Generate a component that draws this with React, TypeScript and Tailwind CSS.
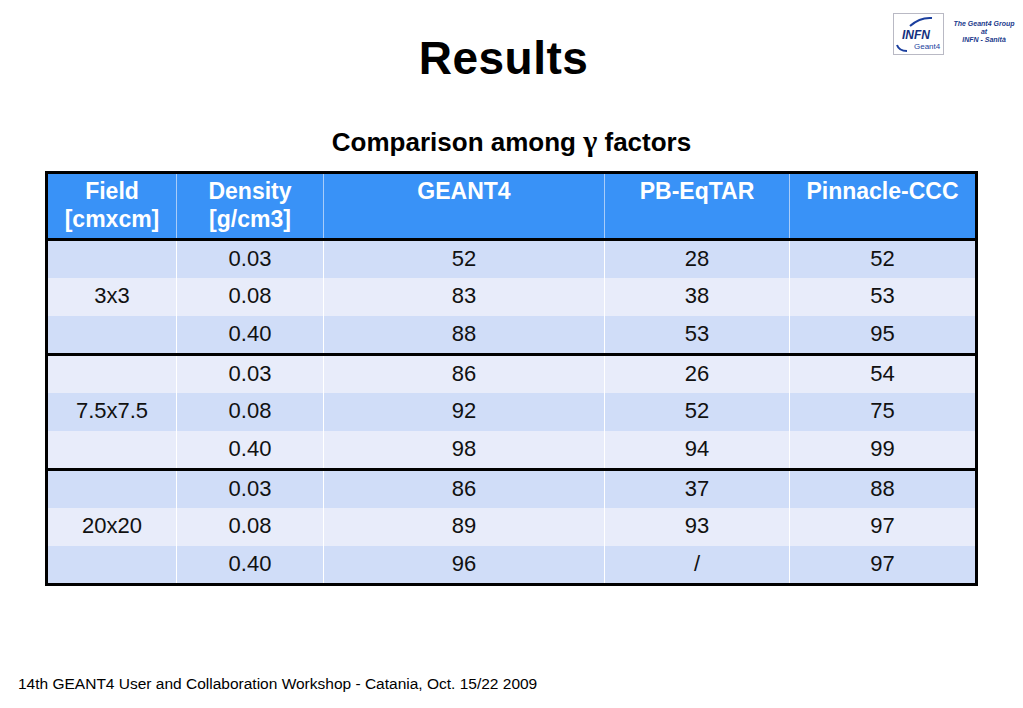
import React from 'react'

const groups = [
  {
    field: '3x3',
    rows: [
      ['0.03', '52', '28', '52'],
      ['0.08', '83', '38', '53'],
      ['0.40', '88', '53', '95'],
    ],
  },
  {
    field: '7.5x7.5',
    rows: [
      ['0.03', '86', '26', '54'],
      ['0.08', '92', '52', '75'],
      ['0.40', '98', '94', '99'],
    ],
  },
  {
    field: '20x20',
    rows: [
      ['0.03', '86', '37', '88'],
      ['0.08', '89', '93', '97'],
      ['0.40', '96', '/', '97'],
    ],
  },
]

const cols = 'grid grid-cols-[128px_147px_281px_185px_186px]'

function Logo() {
  return (
    <div className="absolute left-[893px] top-[13px] flex items-center gap-[10px]">
      <div className="relative h-[42px] w-[51px] border border-[#b9b9c4] bg-white">
        <svg width="49" height="40" viewBox="0 0 49 40" className="absolute left-0 top-0">
          <path d="M3 31 Q 5 37 13 37" fill="none" stroke="#1b3f9e" strokeWidth="2" />
          <path d="M16 12 Q 26 3 38 4" fill="none" stroke="#1b3f9e" strokeWidth="2" />
        </svg>
        <span className="absolute left-[8px] top-[15px] text-[12px] font-bold italic leading-none text-[#14307e] [font-family:'Liberation_Sans',Arial,sans-serif]">
          INFN
        </span>
        <span className="absolute left-[20px] top-[29px] text-[8px] leading-none text-[#1b3f9e] [font-family:'Liberation_Sans',Arial,sans-serif]">
          Geant4
        </span>
      </div>
      <div className="-mt-[4px] flex w-[60px] flex-col items-center whitespace-nowrap text-[7px] font-bold italic leading-[8px] text-[#1b3a8c] [font-family:'Liberation_Sans',Arial,sans-serif]">
        <span>The Geant4 Group</span>
        <span>at</span>
        <span>INFN - Sanità</span>
      </div>
    </div>
  )
}

export default function App() {
  let idx = 0
  return (
    <div className="relative h-[708px] w-[1023px] overflow-hidden bg-white text-black [font-family:'Liberation_Sans',Arial,sans-serif]">
      <Logo />
      <h1 className="pr-[16px] pt-[30px] text-center text-[46px] font-bold leading-[56px] tracking-[0.5px]">Results</h1>
      <h2 className="mt-[40px] text-center text-[26px] font-bold leading-[30px]">
        Comparison among{' '}
        <span className="text-[30px] leading-none [font-family:'Liberation_Serif',serif]">γ</span> factors
      </h2>
      <div className="ml-[45px] mt-[14px] w-[933px] border-[3px] border-black">
        <div className={`${cols} h-[64px] bg-[#3992f7] text-[23px] font-bold leading-[28px] text-white`}>
          {['Field\n[cmxcm]', 'Density\n[g/cm3]', 'GEANT4', 'PB-EqTAR', 'Pinnacle-CCC'].map((h, i) => (
            <div
              key={h}
              className={`whitespace-pre-line pt-[3px] text-center ${i > 0 ? 'border-l border-[#a8ccf9]' : ''}`}
            >
              {h}
            </div>
          ))}
        </div>
        {groups.map((g) => (
          <div key={g.field} className="border-t-[3px] border-black">
            {g.rows.map((r, ri) => {
              const dark = idx++ % 2 === 0
              return (
                <div
                  key={ri}
                  className={`${cols} ${ri === 1 ? 'h-[38px]' : 'h-[37px]'} ${
                    dark ? 'bg-[#d0ddf8]' : 'bg-[#e8ecfa]'
                  } text-[22px] text-[#111]`}
                >
                  <div className="flex items-center justify-center pb-[3px]">{ri === 1 ? g.field : ''}</div>
                  {r.map((c, ci) => (
                    <div key={ci} className="flex items-center justify-center border-l border-white pb-[3px]">
                      {c}
                    </div>
                  ))}
                </div>
              )
            })}
          </div>
        ))}
      </div>
      <div className="absolute left-[18px] top-[675px] text-[15.5px] leading-[18px]">
        14th GEANT4 User and Collaboration Workshop - Catania, Oct. 15/22 2009
      </div>
    </div>
  )
}
